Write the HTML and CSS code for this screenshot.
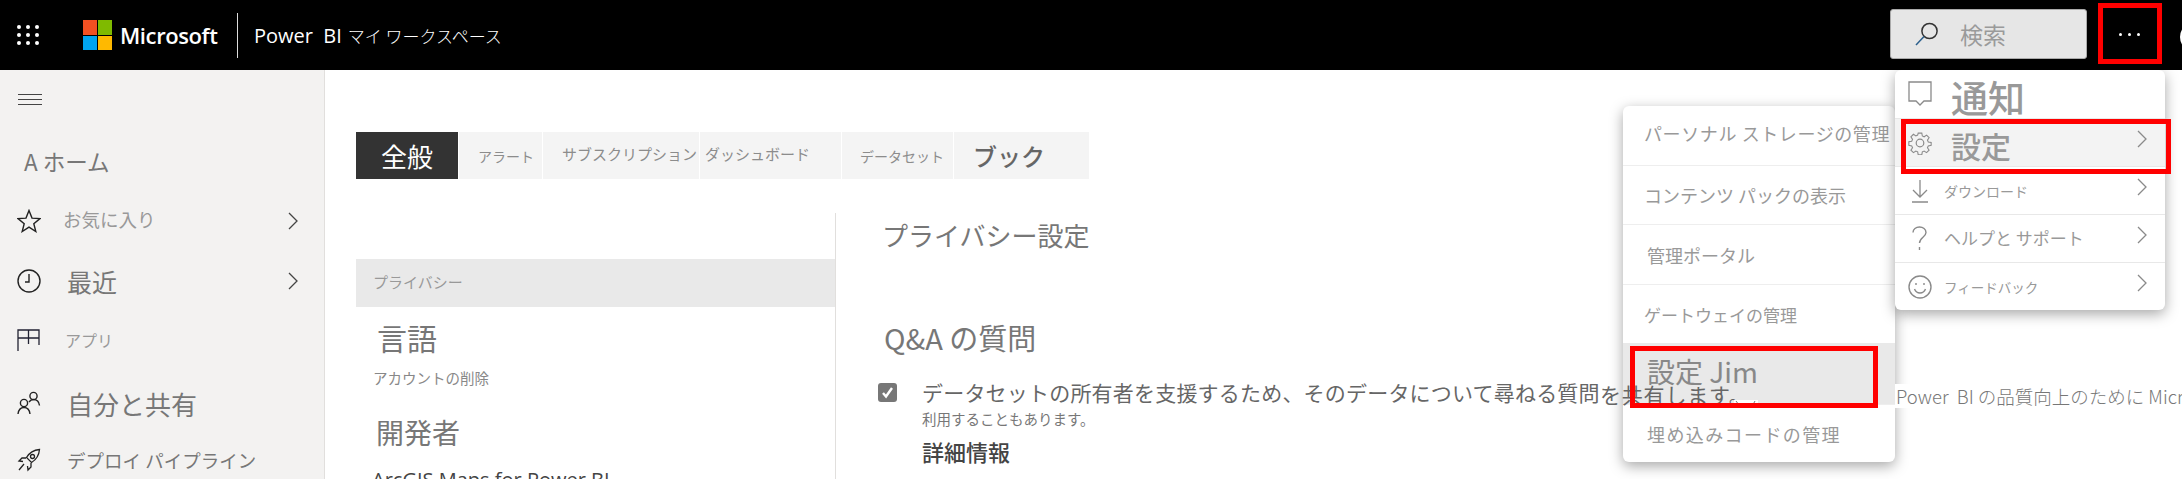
FILE: index.html
```html
<!DOCTYPE html>
<html lang="ja">
<head>
<meta charset="utf-8">
<title>Power BI マイ ワークスペース</title>
<meta name="viewport" content="width=device-width,initial-scale=1">
<link rel="stylesheet" href="styles.css">
</head>
<body>

<header class="topbar">
  <svg class="waffle" width="24" height="22" viewBox="0 0 24 22" fill="#fff">
    <circle cx="3" cy="3" r="2"/><circle cx="12" cy="3" r="2"/><circle cx="21" cy="3" r="2"/>
    <circle cx="3" cy="11" r="2"/><circle cx="12" cy="11" r="2"/><circle cx="21" cy="11" r="2"/>
    <circle cx="3" cy="19" r="2"/><circle cx="12" cy="19" r="2"/><circle cx="21" cy="19" r="2"/>
  </svg>
  <div class="ms-logo"><i class="red"></i><i class="green"></i><i class="blue"></i><i class="yellow"></i></div>
  <span class="ms-name">Microsoft</span>
  <span class="divider"></span>
  <span class="product"><b>Power&nbsp; BI</b> マイ ワークスペース</span>
  <div class="search">
    <svg width="24" height="24" viewBox="0 0 24 24" fill="none" stroke-width="1.5">
      <circle cx="14.5" cy="9" r="7.6" stroke="#333"/>
      <path d="M9 14.5 1 23" stroke="#2b5f8c"/>
    </svg>
    <span>検索</span>
  </div>
  <div class="more"><i></i><i></i><i></i></div>
  <span class="avatar"></span>
</header>

<div class="shell">
  <aside class="sidebar">
    <svg class="hamburger" width="24" height="12" viewBox="0 0 24 12" stroke="#444" stroke-width="1">
      <path d="M0 .5h24M0 5.500h24M0 10.500h24"/>
    </svg>
    <ul class="nav">
      <li class="home"><span class="size-24">A ホーム</span></li>
      <li>
        <svg width="24" height="24" viewBox="0 0 24 24" fill="none" stroke="#222" stroke-width="1.400"><path d="M12 1.500l3 7.600 8 .5-6.200 5.100 2 7.800L12 18.200 5.200 22.500l2-7.800L1 9.600l8-.5z"/></svg>
        <span class="size-18">お気に入り</span>
        <svg class="chev" width="10" height="18" viewBox="0 0 10 18" fill="none" stroke="#444" stroke-width="1.300"><path d="M1 1l8 8-8 8"/></svg>
      </li>
      <li>
        <svg width="24" height="24" viewBox="0 0 24 24" fill="none" stroke="#222" stroke-width="1.400"><circle cx="12" cy="12" r="11"/><path d="M12 5v8h-4"/></svg>
        <span class="size-25">最近</span>
        <svg class="chev" width="10" height="18" viewBox="0 0 10 18" fill="none" stroke="#444" stroke-width="1.300"><path d="M1 1l8 8-8 8"/></svg>
      </li>
      <li>
        <svg width="24" height="22" viewBox="0 0 24 22" fill="none" stroke="#223" stroke-width="1.300"><path d="M1 22V1h21v15M1 9h21M11.500 1v14"/></svg>
        <span class="size-16">アプリ</span>
      </li>
      <li>
        <svg width="24" height="24" viewBox="0 0 24 24" fill="none" stroke="#222" stroke-width="1.400"><circle cx="7" cy="12" r="3.600"/><path d="M1 23c.5-4 3-6.500 6-6.500s5.500 2.500 6 6.500"/><circle cx="16.500" cy="5" r="3.600"/><path d="M12 11c1-1.500 2.700-2.500 4.500-2.500 3 0 5.500 2.200 6 6"/></svg>
        <span class="size-26">自分と共有</span>
      </li>
      <li>
        <svg width="24" height="24" viewBox="0 0 24 24" fill="none" stroke="#222" stroke-width="1.300"><path d="M22.500 1.500c-6 .5-10 3-13 8l5 5c5-3 7.500-7 8-13z"/><circle cx="15.500" cy="8.500" r="2"/><path d="M9 10H5l-3 3 4 .5M14 15v4l-3 3-.5-4M7 16l-5 6"/></svg>
        <span class="size-20">デプロイ パイプライン</span>
      </li>
    </ul>
  </aside>

  <main class="content">
    <nav class="tabs">
      <span class="tab active">全般</span>
      <span class="tab alert">アラート</span>
      <span class="tab subs">サブスクリプション</span>
      <span class="tab dash">ダッシュボード</span>
      <span class="tab data">データセット</span>
      <span class="tab book">ブック</span>
    </nav>

    <div class="settings">
      <section class="side">
        <div class="side-on">プライバシー</div>
        <h3 class="lang">言語</h3>
        <p class="delete">アカウントの削除</p>
        <h3 class="dev">開発者</h3>
        <p class="arcgis">ArcGIS Maps for Power BI</p>
      </section>
      <section class="pane">
        <h2 class="privacy">プライバシー設定</h2>
        <h2 class="qa">Q&amp;A の質問</h2>
        <div class="check-row">
          <span class="check">
            <svg width="13" height="13" viewBox="0 0 13 13" fill="none" stroke="#fff" stroke-width="2.400"><path d="M2 7l3 3.500L11 2"/></svg>
          </span>
          <p class="check-text">データセットの所有者を支援するため、そのデータについて尋ねる質問</p>
        </div>
        <p class="check-sub">利用することもあります。</p>
        <a class="more-link">詳細情報</a>
      </section>
    </div>
  </main>
</div>

<!-- flyout menus -->
<ul class="menu sub-menu">
  <li class="wide">パーソナル ストレージの管理</li>
  <li>コンテンツ パックの表示</li>
  <li class="in">管理ポータル</li>
  <li class="tight">ゲートウェイの管理</li>
  <li class="on in"><span class="jim">設定 Jim</span></li>
  <li class="in spaced">埋め込みコードの管理</li>
</ul>

<ul class="menu main-menu">
  <li class="big">
    <svg width="24" height="26" viewBox="0 0 24 26" fill="none" stroke="#8a8a8a" stroke-width="1.300"><path d="M1 1h22v19h-7l-4 4-4-4H1z"/></svg>
    <span class="notify">通知</span>
  </li>
  <li class="big hi">
    <svg width="24" height="24" viewBox="0 0 24 24" fill="none" stroke="#8a8a8a" stroke-width="1.200"><circle cx="12" cy="12" r="3.800"/><path d="M10 1h4l.6 3.200 2 .9 2.700-1.800 2.800 2.800-1.800 2.700.9 2 3.200.6v3.200l-3.200.6-.9 2 1.800 2.700-2.800 2.800-2.700-1.800-2 .9-.6 3.200h-4l-.6-3.200-2-.9-2.700 1.800-2.800-2.800 1.800-2.700-.9-2-3.200-.6V10.600l3.200-.6.9-2L1.900 5.100l2.800-2.800 2.700 1.800 2-.9z" transform="translate(1.200 1.200) scale(.9)"/></svg>
    <span class="setting">設定</span>
    <svg class="chev" width="10" height="18" viewBox="0 0 10 18" fill="none" stroke="#8a8a8a" stroke-width="1.300"><path d="M1 1l8 8-8 8"/></svg>
  </li>
  <li>
    <svg width="24" height="24" viewBox="0 0 24 24" fill="none" stroke="#8a8a8a" stroke-width="1.300"><path d="M12 1v17M5 11l7 7 7-7M4 23h16"/></svg>
    <span>ダウンロード</span>
    <svg class="chev" width="10" height="18" viewBox="0 0 10 18" fill="none" stroke="#8a8a8a" stroke-width="1.300"><path d="M1 1l8 8-8 8"/></svg>
  </li>
  <li>
    <svg width="24" height="26" viewBox="0 0 24 26" fill="none" stroke="#8a8a8a" stroke-width="1.400"><path d="M5 6.500C5 3 8 1 11.500 1S18 3.200 18 6.500c0 4.500-6.500 5-6.500 10.500M11.500 21v3"/></svg>
    <span class="help">ヘルプと サポート</span>
    <svg class="chev" width="10" height="18" viewBox="0 0 10 18" fill="none" stroke="#8a8a8a" stroke-width="1.300"><path d="M1 1l8 8-8 8"/></svg>
  </li>
  <li>
    <svg width="24" height="24" viewBox="0 0 24 24" fill="none" stroke="#8a8a8a" stroke-width="1.400"><circle cx="12" cy="12" r="11"/><path d="M6.500 14c1 2.500 3 4 5.500 4s4.500-1.500 5.500-4"/><path d="M8 8v2M16 8v2"/></svg>
    <span class="feedback">フィードバック</span>
    <svg class="chev" width="10" height="18" viewBox="0 0 10 18" fill="none" stroke="#8a8a8a" stroke-width="1.300"><path d="M1 1l8 8-8 8"/></svg>
  </li>
</ul>

<!-- text the capture shows painted over the menus -->
<span class="leak leak-share">を共有します。</span>
<svg class="leak leak-tail" width="24" height="6" viewBox="0 0 24 6" fill="none" stroke="#777"><path d="M2 1l3 4M17 4l1.500 1.500L21 1"/></svg>
<span class="leak leak-power">Power&nbsp; BI の品質向上のために Microsoft</span>

<!-- red callouts -->
<span class="callout call-more"></span>
<span class="callout call-setting"></span>
<span class="callout call-jim"></span>

</body>
</html>
```

FILE: styles.css
```css
/* Reset & Base */
*,*::before,*::after{box-sizing:border-box;margin:0;padding:0}
html,body{width:2182px;height:479px;overflow:hidden}
body{
  position:relative;
  font-family:"Noto Sans CJK JP","Open Sans",sans-serif;
  background:#fff;
  color:#777;
}
ul{list-style:none}

/* Top bar */
.topbar{
  height:70px;background:#000;color:#fff;
  display:flex;align-items:center;
  padding-left:16px;overflow:hidden;
}
.waffle{margin-right:43px}
.ms-logo{
  width:29px;height:30px;
  display:grid;grid-template-columns:1fr 1fr;grid-template-rows:1fr 1fr;gap:1px;
  margin-right:8px;
}
.ms-logo .red{background:#f25022}
.ms-logo .green{background:#7fba00}
.ms-logo .blue{background:#00a4ef}
.ms-logo .yellow{background:#ffb900}
.ms-name{font-family:"Open Sans",sans-serif;font-weight:600;font-size:22px;letter-spacing:-.4px;width:117px}
.divider{width:1px;height:45px;background:#ddd;margin-right:16px}
.product{font-size:17px;font-weight:300;width:1636px;white-space:nowrap}
.product b{font-family:"Open Sans",sans-serif;font-weight:400;font-size:20px;margin-right:2px}
.search{
  position:absolute;left:1890px;top:9px;
  width:197px;height:50px;
  background:#e6e6e6;border:1px solid #aaa;border-radius:3px;
  display:flex;align-items:center;gap:21px;padding-left:24px;
  color:#9a9a9a;font-size:23px;
}
.more{position:absolute;left:2119px;top:33px;display:flex;gap:6px}
.more i{width:3px;height:3px;border-radius:50%;background:#fff}
.avatar{position:absolute;left:2180px;top:22px;width:30px;height:30px;border:3px solid #fff;border-radius:50%}

/* Page frame */
.shell{display:grid;grid-template-columns:325px 1fr;height:409px}

/* Sidebar */
.sidebar{background:#f3f2f1;border-right:1px solid #e1dfdd;padding:24px 26px 0 18px;overflow:hidden}
.hamburger{display:block}
.nav{
  margin:25px 0 0 -1px;
  display:grid;grid-template-rows:60px 59px 61px 57px 70px 44px;
}
.nav li{display:flex;align-items:center;gap:26px;white-space:nowrap;color:#777}
.nav li svg:first-child{flex:none}
.nav .home{padding-left:7px}
.nav .chev{margin-left:auto}
.size-16{font-size:16px;color:#999;margin-left:-2px}
.size-18{font-size:18.500px;color:#999;margin:-3px 0 0 -4px}
.size-20{font-size:18.500px}
.size-24{font-size:22.500px}
.size-25{font-size:25px}
.size-26{font-size:26px}

/* Content */
.content{padding:62px 0 0 31px;overflow:hidden}
.tabs{
  display:grid;grid-template-columns:102px 83px 156px 141px 111px 135px;gap:1px;
  width:733px;height:47px;
}
.tab{background:#f4f4f4;color:#8c8c8c;display:flex;align-items:center;white-space:nowrap;overflow:hidden}
.tab.active{background:#333;color:#fff;font-size:26px;padding-left:25px}
.tab.alert{font-size:14px;padding-left:19px}
.tab.subs{font-size:15px;padding-left:19px;padding-bottom:4px}
.tab.dash{font-size:15px;padding-left:5px;padding-bottom:4px}
.tab.data{font-size:14px;padding-left:18px}
.tab.book{font-size:24px;font-weight:500;color:#666;padding-left:19px}

.settings{display:grid;grid-template-columns:480px 1fr;margin-top:34px;height:300px}

/* Left list */
.side{border-right:1px solid #e1dfdd;padding-top:46px}
.side-on{background:#e9e9e9;height:48px;font-size:15px;color:#999;padding-left:17px;line-height:46px}
.lang{font-size:30px;font-weight:400;line-height:40px;margin:10px 0 0 21px}
.delete{font-size:14.500px;color:#888;line-height:20px;margin:11px 0 0 17px}
.dev{font-size:28px;font-weight:400;line-height:36px;margin:26px 0 0 20px}
.arcgis{font-family:"Open Sans",sans-serif;font-size:20px;color:#444;line-height:26px;margin:17px 0 0 16px;white-space:nowrap}

/* Right pane */
.pane{padding:0 0 0 48px;color:#777}
.pane h2{font-size:26px;font-weight:400;line-height:36px;margin-top:4px}
.pane .privacy{margin-left:-2px}
.pane .qa{font-size:29px;margin-top:66px}
.check-row{display:flex;align-items:center;gap:25px;margin:24px 0 0 -6px;height:26px;white-space:nowrap}
.check{
  width:19px;height:19px;border-radius:3px;background:#777;
  display:flex;align-items:center;justify-content:center;flex:none;
}
.check-text{font-size:21px;letter-spacing:.2px;color:#666}
.check-sub{font-size:14.500px;color:#777;line-height:20px;margin:4px 0 0 38px}
.more-link{display:block;font-size:22px;font-weight:500;color:#444;line-height:30px;margin:7px 0 0 38px}

/* Flyout menus */
.menu{
  position:absolute;background:#fff;border-radius:6px;
  box-shadow:0 4px 14px rgba(0,0,0,.35);
  color:#999;z-index:2;
}
.menu li{white-space:nowrap}
.sub-menu{
  left:1623px;top:106px;width:272px;height:356px;
  display:grid;grid-template-rows:59px 59px 60px 59px 61px 58px;
  font-size:18px;
}
.sub-menu li{border-top:1px solid #eee;display:flex;align-items:center;padding-left:21px;overflow:hidden}
.sub-menu li:first-child{border-top:0;padding-bottom:6px}
.sub-menu .wide{letter-spacing:.6px}
.sub-menu .tight{font-size:17px}
.sub-menu .spaced{letter-spacing:1.400px}
.sub-menu .in{padding-left:24px}
.sub-menu .on{background:#e9e9e9;border-top:0;align-items:flex-start;padding-top:10px}
.sub-menu .jim{font-size:28px;line-height:36px;color:#888}
.main-menu{
  left:1895px;top:70px;width:270px;height:240px;
  display:grid;grid-template-rows:repeat(5,48px);
  font-size:14px;
}
.main-menu li{border-top:1px solid #e8e8e8;display:flex;align-items:center;gap:12px;padding:0 18px 0 13px}
.main-menu li:first-child{border-top:0}
.main-menu .hi{background:#f3f3f3}
.main-menu .chev{margin-left:auto;margin-bottom:8px}
.main-menu .help{font-size:17px;margin-top:-3px}
.main-menu .feedback{font-size:13.500px}
.main-menu .big{gap:19px}
.main-menu .big span{font-weight:500}
.notify{font-size:37px;line-height:48px;padding-top:6px}
.setting{font-size:30px;line-height:48px;padding-top:5px}

/* Line of text shown over the menus */
.leak{position:absolute;z-index:3;white-space:nowrap;color:#777}
.leak-share{left:1600px;top:382px;font-size:21px;letter-spacing:.8px;line-height:24px;color:#666}
.leak-tail{left:1734px;top:400px;background:#fff}
.leak-power{left:1895px;top:384px;font-size:18.500px;line-height:24px;padding-left:1px;font-weight:300;background:#fff}

/* Red callouts */
.callout{position:absolute;z-index:4;border:5px solid #f00}
.call-more{left:2098px;top:3px;width:64px;height:61px}
.call-setting{left:1901px;top:119px;width:270px;height:55px}
.call-jim{left:1630px;top:346px;width:248px;height:62px}
```
